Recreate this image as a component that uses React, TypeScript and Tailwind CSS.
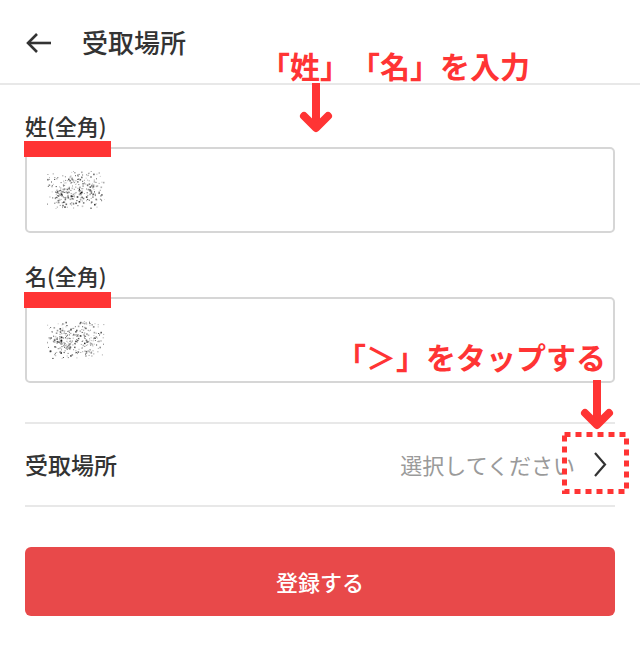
import React from 'react';

// pixelated name placeholder (the reference hides the real value)
function Mosaic({ seed, w = 58, h = 38 }: { seed: number; w?: number; h?: number }) {
    let s = seed;
    const r = () => {
        s = (s * 1664525 + 1013904223) % 4294967296;
        return s / 4294967296;
    };
    const blobs = [
        { cx: w * 0.3, cy: h * 0.52, sx: w * 0.36, sy: h * 0.62, n: 190 },
        { cx: w * 0.74, cy: h * 0.46, sx: w * 0.3, sy: h * 0.66, n: 120 },
    ];
    const dots: { x: number; y: number; c: string; o: number; z: number }[] = [];
    blobs.forEach((b) => {
        for (let i = 0; i < b.n; i++) {
            const x = b.cx + (r() + r() - 1) * b.sx;
            const y = b.cy + (r() + r() - 1) * b.sy;
            const g = Math.floor(r() * 140 + 10);
            dots.push({ x, y, c: `rgb(${g},${g},${g})`, o: 0.35 + r() * 0.65, z: r() > 0.7 ? 1.6 : 1 });
        }
    });
    return (
        <svg width={w} height={h} viewBox={`0 0 ${w} ${h}`}>
            {dots.map((d, i) => (
                <rect key={i} x={d.x.toFixed(1)} y={d.y.toFixed(1)} width={d.z} height={d.z} fill={d.c} opacity={d.o} />
            ))}
        </svg>
    );
}

function DownArrow({ className }: { className?: string }) {
    return (
        <svg width="34" height="51" viewBox="0 0 34 51" className={className}>
            <line x1="17" y1="0" x2="17" y2="44" stroke="#ff3434" strokeWidth="8" />
            <polyline points="5,33 17,45 29,33" fill="none" stroke="#ff3434" strokeWidth="8" strokeLinecap="round" strokeLinejoin="round" />
        </svg>
    );
}

function Field({ label, seed }: { label: string; seed: number }) {
    return (
        <div>
            <p className="text-[22px] leading-[30px] font-medium mb-[7px]">{label}</p>
            <div className="h-[86px] border-2 border-[#d6d6d6] rounded-[5px] flex items-center pl-[20px]">
                <Mosaic seed={seed} />
            </div>
        </div>
    );
}

export default function App() {
    return (
        <div className="relative w-[640px] h-[646px] bg-white text-[#333] font-['Noto_Sans_CJK_JP','Noto_Sans',sans-serif] overflow-hidden">
            {/* Header */}
            <header className="h-[85px] border-b-2 border-[#e8e8e8] flex items-center px-[25px]">
                <svg width="27" height="22" viewBox="0 0 27 22" className="mt-[2px]">
                    <line x1="3" y1="11" x2="26" y2="11" stroke="#333" strokeWidth="2.6" />
                    <polyline points="12,2 3,11 12,20" fill="none" stroke="#333" strokeWidth="2.6" />
                </svg>
                <h1 className="ml-[30px] text-[26px] leading-none font-medium">受取場所</h1>
            </header>

            <main className="px-[25px] pt-[25px]">
                <Field label="姓(全角)" seed={11} />
                <div className="mt-[27px]">
                    <Field label="名(全角)" seed={73} />
                </div>

                <div className="mt-[39px] h-[85px] border-y-2 border-[#e8e8e8] flex items-center justify-between">
                    <span className="text-[23px] font-medium">受取場所</span>
                    <div className="flex items-center">
                        <span className="text-[22px] text-[#9a9a9a]">選択してください</span>
                        <svg width="14" height="27" viewBox="0 0 14 27" className="ml-[18px] mr-[8px]">
                            <polyline points="2,2 12,13.5 2,25" fill="none" stroke="#333" strokeWidth="2.2" />
                        </svg>
                    </div>
                </div>

                <button className="mt-[40px] w-full h-[69px] rounded-[6px] bg-[#e8494a] text-white text-[22px] font-medium">
                    登録する
                </button>
            </main>

            {/* Annotations */}
            <div className="absolute left-[24px] top-[141px] w-[87px] h-[16px] bg-[#ff3434]" />
            <div className="absolute left-[24px] top-[292px] w-[87px] h-[16px] bg-[#ff3434]" />
            <p className="absolute left-[260px] top-[50px] text-[30px] leading-none font-bold text-[#ff3434] whitespace-nowrap [text-spacing-trim:space-all]">「姓」「名」を入力</p>
            <DownArrow className="absolute left-[299px] top-[83px]" />
            <p className="absolute left-[336px] top-[341px] text-[30px] leading-none font-bold text-[#ff3434] whitespace-nowrap [text-spacing-trim:space-all]">「＞」をタップする</p>
            <DownArrow className="absolute left-[580px] top-[380px]" />
            <svg width="68" height="63" viewBox="0 0 68 63" className="absolute left-[562px] top-[432px]">
                <rect x="2.5" y="2.5" width="62" height="57" fill="none" stroke="#ff3434" strokeWidth="5" strokeDasharray="6 5" />
            </svg>
        </div>
    );
}
